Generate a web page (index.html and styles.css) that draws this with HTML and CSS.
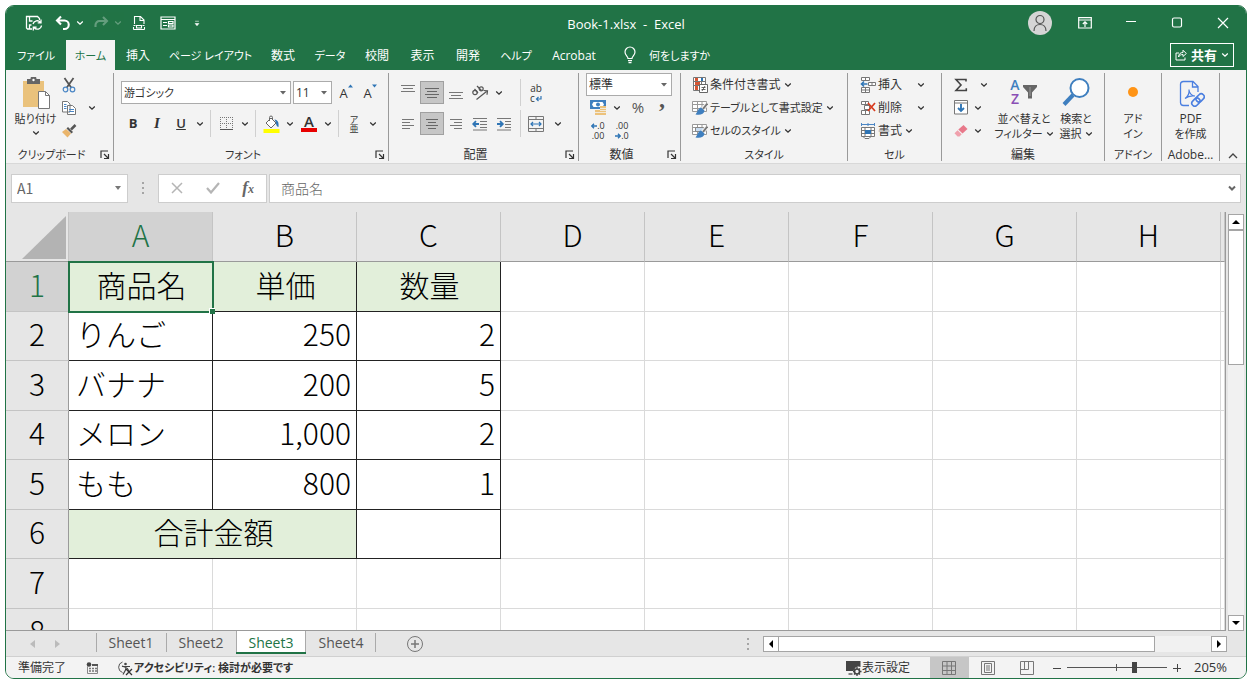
FILE: index.html
```html
<!DOCTYPE html>
<html lang="ja">
<head>
    <meta charset="UTF-8">
    <meta name="viewport" content="width=device-width, initial-scale=1.0">
    <title>Book-1.xlsx - Excel</title>
    <link rel="stylesheet" href="styles.css">
</head>
<body>
    <svg class="defs" aria-hidden="true">
        <symbol id="chev" viewBox="0 0 8 8"><path d="M1.2 2.5 4 5.2 6.8 2.5" fill="none" stroke="currentColor" stroke-width="1.3"/></symbol>
        <symbol id="launch" viewBox="0 0 10 10"><path d="M1 8V1h7M4 4l4 4M8.500 4v4.500H4" fill="none" stroke="currentColor" stroke-width="1.200"/></symbol>
        <symbol id="brush" viewBox="0 0 16 16"><path d="M15.300 3.500 10.500 9.500" stroke="#f3f3f3" stroke-width="4"/><path d="M15.300 3.500 11 9" stroke="#777" stroke-width="2"/><path d="M12.500 10.500 9 7.500c-3 .5-3 4-5.500 7 4.500 1 8.500 0 9-4z" fill="#3f7fbf"/></symbol>
        <symbol id="minigrid" viewBox="0 0 16 16"><path d="M.5 1.500h14v10H.5zM.5 4.500h14M.5 8.500h14M5.500 1.500v10M10 1.500v10" fill="#fff" stroke="#999"/></symbol>
    </svg>

    <div class="window">
        <!-- Title bar -->
        <header class="titlebar">
            <div class="quick">
                <button class="ib" aria-label="上書き保存"><svg width="18" height="18" viewBox="0 0 18 18"><path d="M7 15H2.500L1.500 14V2.500h11l2 2V6M4.500 2.500V7h3M4.500 15v-4h2" fill="none" stroke="#fff" stroke-width="1.300"/><path d="M8 10a4.200 4.200 0 0 1 7.500-1.500M16 5.500v3.300h-3.300M16.500 11.500A4.200 4.200 0 0 1 9 13.500M8.300 16.500v-3.300h3.300" fill="none" stroke="#fff" stroke-width="1.300"/></svg></button>
                <div class="pair">
                    <button class="ib" aria-label="元に戻す"><svg width="16" height="16" viewBox="0 0 16 16"><path d="M6 1.500 2 5.500l4 4M2 5.500h7.500a4.200 4.200 0 0 1 0 8.500H8" fill="none" stroke="#fff" stroke-width="2.100"/></svg></button>
                    <button class="caret" aria-label="元に戻す履歴"><svg><use href="#chev"/></svg></button>
                </div>
                <div class="pair dim">
                    <button class="ib" aria-label="やり直し"><svg width="16" height="16" viewBox="0 0 16 16"><path d="M10 2l4 4-4 4M14 6H6.500a4 4 0 0 0-4 4v2" fill="none" stroke="#fff" stroke-width="2.100"/></svg></button>
                    <button class="caret" aria-label="やり直し履歴"><svg><use href="#chev"/></svg></button>
                </div>
                <button class="ib" aria-label="印刷プレビュー"><svg width="14" height="16" viewBox="0 0 14 16"><path d="M2.500 9V1.500h6l3.500 3.500v4M8 1.500V5.500h4M1.500 10.500h2M10.500 10.500h2M1.500 14.500h11M1.500 12v2.500M12.500 12v2.500M4.500 10.500h5v2.500h-5z" fill="none" stroke="#fff" stroke-width="1.100"/></svg></button>
                <button class="ib" aria-label="フォーム"><svg width="16" height="14" viewBox="0 0 16 14"><path d="M1 1h14v12H1zM1 3.500h14M3 6.500h4M3 9.500h4M8.500 5.500h4.500v2H8.500zM8.500 9h4.500v2H8.500z" fill="none" stroke="#fff" stroke-width="1.200"/></svg></button>
                <button class="ib" aria-label="カスタマイズ"><svg width="6" height="7" viewBox="0 0 8 8"><path d="M1.500 1h5M1.500 4h5L4 7z" fill="#fff" stroke="#fff" stroke-width=".8"/></svg></button>
            </div>
            <div class="title">Book-1.xlsx &nbsp;-&nbsp; Excel</div>
            <div class="winbtns">
                <button class="avatar" aria-label="アカウント"><svg width="16" height="18" viewBox="0 0 16 18"><circle cx="8" cy="5.500" r="4" fill="none" stroke="#555" stroke-width="1.200"/><path d="M2 17c0-4 2.500-6.500 6-6.500s6 2.500 6 6.500" fill="none" stroke="#555" stroke-width="1.200"/></svg></button>
                <button class="wb" aria-label="リボンの表示"><svg width="14" height="12" viewBox="0 0 14 12"><path d="M.7.7h12.600v10.300H.7zM.7 3h12.600M7 10V5M4.800 7 7 4.800 9.200 7" fill="none" stroke="#fff" stroke-width="1.200"/></svg></button>
                <button class="wb" aria-label="最小化"><svg width="12" height="12" viewBox="0 0 12 12"><path d="M1 4.500h10" stroke="#fff" stroke-width="1.200"/></svg></button>
                <button class="wb" aria-label="最大化"><svg width="12" height="12" viewBox="0 0 12 12"><rect x="1.500" y="1" width="9" height="9" rx="1.500" fill="none" stroke="#fff" stroke-width="1.200"/></svg></button>
                <button class="wb" aria-label="閉じる"><svg width="12" height="12" viewBox="0 0 12 12"><path d="m1 1 10 10M11 1 1 11" stroke="#fff" stroke-width="1.200"/></svg></button>
            </div>
        </header>

        <!-- Ribbon tabs -->
        <nav class="tabs">
            <button class="kana">ファイル</button>
            <button class="active kana">ホーム</button>
            <button>挿入</button>
            <button class="kana">ページ レイアウト</button>
            <button>数式</button>
            <button class="kana">データ</button>
            <button>校閲</button>
            <button>表示</button>
            <button>開発</button>
            <button class="kana">ヘルプ</button>
            <button>Acrobat</button>
            <button class="tellme kana"><svg width="12" height="18" viewBox="0 0 12 18"><path d="M4 12.500c0-2-3-3-3-6.500a5 5 0 0 1 10 0c0 3.500-3 4.500-3 6.500zM4 14.700h4M4.500 16.700h3" fill="none" stroke="#fff" stroke-width="1.200"/></svg>何をしますか</button>
            <button class="share"><svg width="12" height="12" viewBox="0 0 12 12"><path d="M4 4H1v7h9V8.500M3.500 8c.2-3 1.800-4.500 4.500-4.500V1.200L11.300 4.500 8 7.500V5.500C6 5.500 4.500 6.200 3.500 8z" fill="none" stroke="#fff"/></svg><b>共有</b><svg class="chev"><use href="#chev"/></svg></button>
        </nav>

        <!-- Ribbon -->
        <div class="ribbon">
            <section class="group">
                <div class="body clipboard">
                    <button class="big kana">
                        <svg width="30" height="32" viewBox="0 0 30 32"><path d="M2 4h21v26H2z" fill="#eac27c"/><path d="M6 2h3.500a3 3 0 0 1 6 0H19v5H6z" fill="#666"/><circle cx="12.500" cy="3" r="1.200" fill="#fff"/><path d="M17.500 14.500h7l4 4v13h-11z" fill="#fff" stroke="#777"/><path d="M24.500 14.500v4h4" fill="none" stroke="#777"/></svg>
                        <span>貼り付け</span>
                        <svg class="chev"><use href="#chev"/></svg>
                    </button>
                    <div class="stack">
                        <button class="ib" aria-label="切り取り"><svg width="14" height="16" viewBox="0 0 14 16"><path d="M2.500 1 9.500 11M11.500 1 4.500 11" stroke="#555" stroke-width="1.800"/><circle cx="3.500" cy="12.500" r="2.300" fill="none" stroke="#4a86c5" stroke-width="1.200"/><circle cx="10.500" cy="12.500" r="2.300" fill="none" stroke="#4a86c5" stroke-width="1.200"/></svg></button>
                        <div class="pair">
                            <button class="ib" aria-label="コピー"><svg width="16" height="16" viewBox="0 0 16 16"><path d="M1.500 1.500h5l2.500 2.500v8H1.500zM6.500 5.500h5l3 3v6h-8z" fill="#fff" stroke="#777"/><path d="M3 4.500h2.500M3 6.500h2.500M3 8.500h2.500M8 9.500h5M8 11.500h5" stroke="#4a86c5"/></svg></button>
                            <button class="caret" aria-label="コピーのオプション"><svg><use href="#chev"/></svg></button>
                        </div>
                        <button class="ib" aria-label="書式のコピー"><svg width="16" height="14" viewBox="0 0 16 14"><path d="M14.500 1 10 5.500" stroke="#555" stroke-width="2.500"/><path d="m7 3 5 5-1.500 1.500-5-5z" fill="#555"/><path d="M5 5 10 9.500 6.500 13.500 1 8z" fill="#eab56c"/></svg></button>
                    </div>
                </div>
                <div class="foot"><span class="kana">クリップボード</span><button class="launch" aria-label="クリップボードの設定"><svg width="10" height="10"><use href="#launch"/></svg></button></div>
            </section>

            <section class="group">
                <div class="body rows">
                    <div class="row">
                        <select class="fontname kana" aria-label="フォント"><option>游ゴシック</option></select>
                        <select class="fontsize" aria-label="フォント サイズ"><option>11</option></select>
                        <button class="ib grow" aria-label="フォント サイズの拡大"><span>A</span><svg width="5" height="4" viewBox="0 0 5 4"><path d="M0 3.500h5L2.500.5z" fill="#2f75b5"/></svg></button>
                        <button class="ib grow" aria-label="フォント サイズの縮小"><span>A</span><svg width="5" height="4" viewBox="0 0 5 4"><path d="M0 .5h5L2.500 3.500z" fill="#2f75b5"/></svg></button>
                    </div>
                    <div class="row">
                        <button class="ib letter"><b>B</b></button>
                        <button class="ib letter"><i>I</i></button>
                        <button class="ib letter"><u>U</u></button>
                        <button class="caret" aria-label="下線の種類"><svg><use href="#chev"/></svg></button>
                        <span class="sep"></span>
                        <button class="ib" aria-label="罫線"><svg width="15" height="15" viewBox="0 0 15 15"><path d="M1 1.500h13M1.500 1v13M13.500 1v13M7.500 1v13M1 7.500h13" stroke="#777" stroke-dasharray="1 1"/><path d="M1 13.500h13" stroke="#555"/></svg></button>
                        <button class="caret" aria-label="罫線の種類"><svg><use href="#chev"/></svg></button>
                        <span class="sep"></span>
                        <button class="ib" aria-label="塗りつぶしの色"><svg width="17" height="18" viewBox="0 0 17 18"><path d="M3 8 8 3l5 5-5 5z" fill="#fff" stroke="#666"/><path d="M6.500 6V2.500a1.500 1.500 0 0 1 3 0V5" fill="none" stroke="#666"/><path d="M11.500 4.500c3.500.5 4.500 3 4 7.500-1.800-.5-2.500-2-2.500-4.500z" fill="#2f75b5"/><path d="M.5 14h16v4H.5z" fill="#ff0"/></svg></button>
                        <button class="caret" aria-label="塗りつぶしの色の選択"><svg><use href="#chev"/></svg></button>
                        <button class="ib fcolor" aria-label="フォントの色"><b>A</b></button>
                        <button class="caret" aria-label="フォントの色の選択"><svg><use href="#chev"/></svg></button>
                        <span class="sep"></span>
                        <button class="ib ruby" aria-label="ふりがな"><span>ア</span><span>亜</span></button>
                        <button class="caret" aria-label="ふりがなの設定"><svg><use href="#chev"/></svg></button>
                    </div>
                </div>
                <div class="foot"><span class="kana">フォント</span><button class="launch" aria-label="フォントの設定"><svg width="10" height="10"><use href="#launch"/></svg></button></div>
            </section>

            <section class="group">
                <div class="body rows align">
                    <div class="row">
                        <button class="ib" aria-label="上揃え"><svg width="16" height="16" viewBox="0 0 16 16"><path d="M1 .5h14M3 3.500h10M1 6.500h14" stroke="#777"/></svg></button>
                        <button class="ib on" aria-label="上下中央揃え"><svg width="16" height="16" viewBox="0 0 16 16"><path d="M1 3.500h14M3 6.500h10M1 9.500h14M3 12.500h10" stroke="#666"/></svg></button>
                        <button class="ib" aria-label="下揃え"><svg width="16" height="16" viewBox="0 0 16 16"><path d="M1 7.500h14M3 10.500h10M1 13.500h14" stroke="#777"/></svg></button>
                        <button class="ib" aria-label="方向"><svg width="18" height="16" viewBox="0 0 18 16"><g fill="none" stroke="#555" stroke-width="1.200"><circle cx="4" cy="7.500" r="2.200"/><path d="M3.500 4 7 8"/><path d="M6 1 10.500 5.500"/><circle cx="10.200" cy="3.800" r="2"/><path d="M5.500 14.500 15.500 6.500M12.500 5.500l4 .3-.5 4"/></g></svg></button>
                        <button class="caret" aria-label="方向の選択"><svg><use href="#chev"/></svg></button>
                        <span class="sep"></span>
                        <button class="ib wrap" aria-label="折り返して全体を表示する"><span>ab</span><span>c<svg width="7" height="6" viewBox="0 0 7 6"><path d="M6 0v3H1.500M3.500 1 1.500 3l2 2" fill="none" stroke="#2f75b5" stroke-width="1.200"/></svg></span></button>
                    </div>
                    <div class="row">
                        <button class="ib" aria-label="左揃え"><svg width="14" height="12" viewBox="0 0 14 12"><path d="M1 1.500h12M1 4.500h8M1 7.500h12M1 10.500h8" stroke="#777"/></svg></button>
                        <button class="ib on" aria-label="中央揃え"><svg width="14" height="12" viewBox="0 0 14 12"><path d="M1 1.500h12M3 4.500h8M1 7.500h12M3 10.500h8" stroke="#666"/></svg></button>
                        <button class="ib" aria-label="右揃え"><svg width="14" height="12" viewBox="0 0 14 12"><path d="M1 1.500h12M5 4.500h8M1 7.500h12M5 10.500h8" stroke="#777"/></svg></button>
                        <button class="ib" aria-label="インデントを減らす"><svg width="16" height="14" viewBox="0 0 16 14"><path d="M1 1.500h14M8 4.500h7M8 7.500h7M8 10.500h7M1 13h14" stroke="#777"/><path d="M7 7H1.500M4 4.200 1.200 7 4 9.800" fill="none" stroke="#2f75b5" stroke-width="1.800"/></svg></button>
                        <button class="ib" aria-label="インデントを増やす"><svg width="16" height="14" viewBox="0 0 16 14"><path d="M1 1.500h14M9 4.500h6M9 7.500h6M9 10.500h6M1 13h14" stroke="#777"/><path d="M1 7h5.500M4 4.200 6.800 7 4 9.800" fill="none" stroke="#2f75b5" stroke-width="1.800"/></svg></button>
                        <span class="sep"></span>
                        <button class="ib" aria-label="セルを結合して中央揃え"><svg width="16" height="16" viewBox="0 0 16 16"><path d="M.5.500h15v15H.5zM.5 3.500h15M.5 12.500h15M8 .5v3M8 12.500v3" fill="none" stroke="#777"/><path d="M3 8h10M5 6 3 8l2 2M11 6l2 2-2 2" fill="none" stroke="#2f75b5" stroke-width="1.200"/></svg></button>
                        <button class="caret wide" aria-label="結合の種類"><svg><use href="#chev"/></svg></button>
                    </div>
                </div>
                <div class="foot"><span>配置</span><button class="launch" aria-label="配置の設定"><svg width="10" height="10"><use href="#launch"/></svg></button></div>
            </section>

            <section class="group">
                <div class="body lines">
                    <select class="format" aria-label="表示形式"><option>標準</option></select>
                    <div class="row">
                        <button class="ib" aria-label="通貨表示形式"><svg width="16" height="15" viewBox="0 0 16 15"><path d="M0 0h16v9H0z" fill="#3f7fbf"/><path d="M2 4.500 3.500 2h9L14 4.500 12.500 7h-9z" fill="#fff"/><circle cx="8" cy="4.500" r="2" fill="#3f7fbf"/><path d="M10 6h6v9h-6zM5 10h5v5H5z" fill="#ecc27c"/><path d="M10 8.500h6M10 10.500h6M10 12.500h6M5 12.500h5" stroke="#f3f3f3" stroke-width=".8"/></svg></button>
                        <button class="caret" aria-label="通貨の選択"><svg><use href="#chev"/></svg></button>
                        <button class="ib sym">%</button>
                        <button class="ib comma"><b>,</b></button>
                    </div>
                    <div class="row">
                        <button class="ib dec" aria-label="小数点以下の表示桁数を増やす"><span><svg width="6" height="6" viewBox="0 0 6 6"><path d="M6 3H1M3 .8.800 3 3 5.200" fill="none" stroke="#2f75b5" stroke-width="1.400"/></svg>.0</span><span>.00</span></button>
                        <button class="ib dec" aria-label="小数点以下の表示桁数を減らす"><span>.00</span><span><svg width="6" height="6" viewBox="0 0 6 6"><path d="M0 3h5M3 .8 5.200 3 3 5.200" fill="none" stroke="#2f75b5" stroke-width="1.400"/></svg>.0</span></button>
                    </div>
                </div>
                <div class="foot"><span>数値</span><button class="launch" aria-label="数値の設定"><svg width="10" height="10"><use href="#launch"/></svg></button></div>
            </section>

            <section class="group">
                <div class="body lines styles">
                    <button class="cmd"><svg width="16" height="16" viewBox="0 0 16 16"><path d="M1.500.5h12v13h-12zM1.500 4.500h12M1.500 8.500h12M5.500.5v13M9.500.5v13" fill="#fff" stroke="#777"/><path d="M3 1h3v3H3zM3 5h5v3H3zM3 9h3v4H3z" fill="#d65532"/><path d="M9 1h2v3H9z" fill="#2f75b5"/><path d="M7.500 7.500h8v8h-8z" fill="#fff" stroke="#666"/><path d="M9.500 10.500h4M9.500 12.500h4M13 9l-3 5" stroke="#444" stroke-width=".8"/></svg>条件付き書式<svg class="chev"><use href="#chev"/></svg></button>
                    <button class="cmd kana"><svg width="16" height="16" viewBox="0 0 16 16"><use href="#minigrid" width="16" height="16"/><use href="#brush" width="16" height="16"/></svg>テーブルとして書式設定<svg class="chev"><use href="#chev"/></svg></button>
                    <button class="cmd kana"><svg width="16" height="16" viewBox="0 0 16 16"><use href="#minigrid" width="16" height="16"/><path d="M3.500 4.500h8v4h-8z" fill="#c9dcf0" stroke="#888"/><use href="#brush" width="16" height="16"/></svg>セルのスタイル<svg class="chev"><use href="#chev"/></svg></button>
                </div>
                <div class="foot"><span class="kana">スタイル</span></div>
            </section>

            <section class="group">
                <div class="body lines cells">
                    <div class="row"><button class="cmd"><svg width="16" height="16" viewBox="0 0 16 16"><path d="M1.500.5h8v3h-8zM1.500 10.500h8v5h-8zM5.500.5v3M5.500 10.500v5M1.500 13h8M8.500 5.500h7v3h-7zM12 5.500v3" fill="#fff" stroke="#777"/><path d="M7.500 7H1.500M4 4.500 1.500 7 4 9.500" fill="none" stroke="#2f75b5" stroke-width="1.600"/></svg>挿入</button><button class="caret far" aria-label="挿入の種類"><svg><use href="#chev"/></svg></button></div>
                    <div class="row"><button class="cmd"><svg width="16" height="16" viewBox="0 0 16 16"><path d="M1.500 1.500h7v3h-7zM4.500 5.500h5v4h-5zM1.500 10.500h8v4h-8zM5.500 10.500v4M5.500 1.500v3" fill="#fff" stroke="#777"/><path d="m8 3 7 8M15 3 8 11" stroke="#d83b1e" stroke-width="1.700"/></svg>削除</button><button class="caret far" aria-label="削除の種類"><svg><use href="#chev"/></svg></button></div>
                    <button class="cmd"><svg width="16" height="16" viewBox="0 0 16 16"><path d="M1.500 4.500h13v9h-13zM1.500 7.500h13M1.500 10.500h13M5 4.500v9M11 4.500v9" fill="#fff" stroke="#777"/><path d="M5 7h6v4H5z" fill="#2f75b5"/><path d="M1.500 1.500h13M1.500 0v3M14.500 0v3M8 0v3" stroke="#4a86c5"/><path d="M3 13.500h8l-2 2H5z" fill="#fff" stroke="#777"/></svg>書式<svg class="chev"><use href="#chev"/></svg></button>
                </div>
                <div class="foot"><span class="kana">セル</span></div>
            </section>

            <section class="group">
                <div class="body editing">
                    <div class="stack">
                        <div class="pair"><button class="ib" aria-label="オート SUM"><svg width="14" height="14" viewBox="0 0 14 14"><path d="M12 3.500V1.500H2l5 5.500-5 5.500h10.300v-2.300" fill="none" stroke="#444" stroke-width="1.600"/></svg></button><button class="caret sum" aria-label="集計方法"><svg><use href="#chev"/></svg></button></div>
                        <div class="pair"><button class="ib" aria-label="フィル"><svg width="14" height="15" viewBox="0 0 14 15"><path d="M.5.500h13v13.500H.5z" fill="#fff" stroke="#777"/><path d="M.5 3h13" stroke="#777"/><path d="M7 4v7M4 8l3 3 3-3" fill="none" stroke="#2f75b5" stroke-width="1.900"/></svg></button><button class="caret" aria-label="フィルの種類"><svg><use href="#chev"/></svg></button></div>
                        <div class="pair"><button class="ib" aria-label="クリア"><svg width="14" height="14" viewBox="0 0 14 14"><path d="M9.500 1 13.500 5 8.500 9.500 4.300 5.500z" fill="#e8788a"/><path d="M3.600 6.200 7.700 10.200 5.500 12.500H3.500L.5 9.300z" fill="#f0a0ac"/></svg></button><button class="caret" aria-label="クリアの種類"><svg><use href="#chev"/></svg></button></div>
                    </div>
                    <button class="big two wider">
                        <span class="az"><span class="azcol"><b>A</b><b>Z</b></span><svg width="16" height="16" viewBox="0 0 16 16"><path d="M1 1h14v2L10 8.500v6H6v-6L1 3z" fill="#666"/><path d="M8 3v9" stroke="#999"/></svg></span>
                        <span class="kana">並べ替えと</span>
                        <span class="kana">フィルター<svg class="chev"><use href="#chev"/></svg></span>
                    </button>
                    <button class="big two">
                        <svg width="28" height="30" viewBox="0 0 28 30"><circle cx="17.500" cy="11" r="9" fill="#fff" stroke="#3f7fbf" stroke-width="2"/><path d="M11 18 2 27.500" stroke="#3f7fbf" stroke-width="4"/></svg>
                        <span class="kana">検索と</span>
                        <span class="kana">選択<svg class="chev"><use href="#chev"/></svg></span>
                    </button>
                </div>
                <div class="foot"><span>編集</span></div>
            </section>

            <section class="group">
                <div class="body center">
                    <button class="big two">
                        <svg width="28" height="30" viewBox="0 0 28 30"><circle cx="14" cy="15" r="5" fill="#ff9416"/></svg>
                        <span class="kana">アド</span>
                        <span class="kana">イン</span>
                    </button>
                </div>
                <div class="foot"><span class="kana">アドイン</span></div>
            </section>

            <section class="group">
                <div class="body center">
                    <button class="big two">
                        <svg width="28" height="30" viewBox="0 0 28 30"><path d="M12 28.500H6.500a3 3 0 0 1-3-3v-18a3 3 0 0 1 3-3H16l5 5V15M15.500 4.500V10H21" fill="none" stroke="#4b7fe0" stroke-width="1.300"/><path d="M8 21.500c3-2 4.500-5 4-9M12 13c.5 3.500 2.500 5.500 6 6M8 21.500c3-2.500 6-3 10-2.500" fill="none" stroke="#4b7fe0" stroke-width="1.200"/><g fill="none" stroke="#4b7fe0" stroke-width="1.600" transform="rotate(-45 21 23)"><rect x="13.500" y="20" width="9" height="6" rx="3"/><rect x="19.500" y="20" width="9" height="6" rx="3"/></g></svg>
                        <span>PDF</span>
                        <span class="kana">を作成</span>
                    </button>
                </div>
                <div class="foot"><span>Adobe…</span></div>
            </section>
            <button class="collapse" aria-label="リボンを折りたたむ"><svg width="10" height="8" viewBox="0 0 10 8"><path d="M1 6l4-4 4 4" fill="none" stroke="#444" stroke-width="1.300"/></svg></button>
        </div>

        <!-- Formula bar -->
        <div class="formulabar">
            <div class="namebox">
                <input type="text" value="A1" aria-label="名前ボックス">
                <svg width="6" height="4" viewBox="0 0 6 4"><path d="M0 0h6L3 4z" fill="#777"/></svg>
            </div>
            <span class="dots"></span>
            <div class="fx">
                <button aria-label="キャンセル"><svg width="14" height="12" viewBox="0 0 14 12"><path d="m2 1 10 10M12 1 2 11" stroke="#b5b5b5" stroke-width="1.500"/></svg></button>
                <button aria-label="入力"><svg width="14" height="12" viewBox="0 0 14 12"><path d="m1 6 4 4.500L13 1" fill="none" stroke="#b5b5b5" stroke-width="2.200"/></svg></button>
                <button aria-label="関数の挿入"><i>f<small>x</small></i></button>
            </div>
            <div class="formula">
                <input type="text" value="商品名" aria-label="数式バー">
                <button aria-label="展開"><svg width="8" height="8" viewBox="0 0 8 8"><path d="M1 2.500 4 5.500 7 2.500" fill="none" stroke="#666" stroke-width="2"/></svg></button>
            </div>
        </div>

        <!-- Worksheet -->
        <main class="sheet">
            <div class="gridwrap">
                <table class="grid">
                    <colgroup><col class="rowhead"><col class="c"><col class="c"><col class="c"><col class="c"><col class="c"><col class="c"><col class="c"><col class="c"><col></colgroup>
                    <thead>
                        <tr><th class="corner"><svg width="44" height="43" viewBox="0 0 44 43"><path d="M44 0v43H0z" fill="#b3b3b3"/></svg></th><th class="sel">A</th><th>B</th><th>C</th><th>D</th><th>E</th><th>F</th><th>G</th><th>H</th><th></th></tr>
                    </thead>
                    <tbody>
                        <tr><th class="sel">1</th><td class="b head current">商品名</td><td class="b head">単価</td><td class="b head">数量</td><td></td><td></td><td></td><td></td><td></td><td></td></tr>
                        <tr><th>2</th><td class="b">りんご</td><td class="b num">250</td><td class="b num">2</td><td></td><td></td><td></td><td></td><td></td><td></td></tr>
                        <tr><th>3</th><td class="b">バナナ</td><td class="b num">200</td><td class="b num">5</td><td></td><td></td><td></td><td></td><td></td><td></td></tr>
                        <tr><th>4</th><td class="b">メロン</td><td class="b num">1,000</td><td class="b num">2</td><td></td><td></td><td></td><td></td><td></td><td></td></tr>
                        <tr><th>5</th><td class="b">もも</td><td class="b num">800</td><td class="b num">1</td><td></td><td></td><td></td><td></td><td></td><td></td></tr>
                        <tr><th>6</th><td class="b head" colspan="2">合計金額</td><td class="b"></td><td></td><td></td><td></td><td></td><td></td><td></td></tr>
                        <tr><th>7</th><td></td><td></td><td></td><td></td><td></td><td></td><td></td><td></td><td></td></tr>
                        <tr><th>8</th><td></td><td></td><td></td><td></td><td></td><td></td><td></td><td></td><td></td></tr>
                    </tbody>
                </table>
            </div>
            <div class="vscroll">
                <button aria-label="上へ"><svg width="8" height="4" viewBox="0 0 8 4"><path d="M0 4h8L4 0z"/></svg></button>
                <div class="track"><div class="thumb"></div></div>
                <button aria-label="下へ"><svg width="8" height="4" viewBox="0 0 8 4"><path d="M0 0h8L4 4z"/></svg></button>
            </div>
        </main>

        <!-- Sheet tabs -->
        <div class="sheetbar">
            <div class="sheetnav">
                <button aria-label="前のシート"><svg width="5" height="8" viewBox="0 0 5 8"><path d="M5 0v8L0 4z" fill="#bbb"/></svg></button>
                <button aria-label="次のシート"><svg width="5" height="8" viewBox="0 0 5 8"><path d="M0 0v8l5-4z" fill="#bbb"/></svg></button>
            </div>
            <div class="sheettabs">
                <button>Sheet1</button>
                <button>Sheet2</button>
                <button class="active">Sheet3</button>
                <button>Sheet4</button>
            </div>
            <button class="add" aria-label="新しいシート"><svg width="18" height="18" viewBox="0 0 18 18"><circle cx="9" cy="9" r="7.500" fill="none" stroke="#777"/><path d="M9 5v8M5 9h8" stroke="#777" stroke-width="1.500"/></svg></button>
            <span class="dots"></span>
            <div class="hscroll">
                <button aria-label="左へ"><svg width="4" height="8" viewBox="0 0 4 8"><path d="M4 0v8L0 4z"/></svg></button>
                <div class="track"><div class="thumb"></div></div>
                <button aria-label="右へ"><svg width="4" height="8" viewBox="0 0 4 8"><path d="M0 0v8l4-4z"/></svg></button>
            </div>
        </div>

        <!-- Status bar -->
        <footer class="status">
            <span class="ready">準備完了</span>
            <svg class="macro" width="13" height="12" viewBox="0 0 13 12"><path d="M1.500 4.500v7h10v-9H6" fill="none" stroke="#888"/><circle cx="3" cy="2.500" r="2.300" fill="#444"/><path d="M6 3h6" stroke="#555" stroke-width="2"/><path d="M3 6.500h8M3 9h8" stroke="#777" stroke-width="1.400" stroke-dasharray="2 1"/></svg>
            <button class="access kana"><svg width="17" height="16" viewBox="0 0 17 16"><path d="M5.500 12.500A5.500 5.500 0 0 1 5.500 2" fill="none" stroke="#555"/><path d="M5 6l4 1.500L8.500 10 6 14.500M5 6.500h8M10 8l2 3" fill="none" stroke="#444" stroke-width="1.200"/><circle cx="8.500" cy="4" r="1.300" fill="#444"/><path d="m9 9 6 6M15 9 9 15" stroke="#333" stroke-width="1.300"/></svg>アクセシビリティ: 検討が必要です</button>
            <button class="display"><svg width="17" height="16" viewBox="0 0 17 16"><path d="M1 1h14.500v6a5 5 0 0 0-7 4H1z" fill="#444"/><path d="M3.500 14h4" stroke="#444" stroke-width="1.300"/><circle cx="12" cy="11.500" r="2.500" fill="none" stroke="#444" stroke-width="1.600"/><path d="M12 7v2M12 14v2M8 11.500h2M14 11.500h2.500M9 8.500l1.300 1.300M13.700 13.200 15 14.500M15 8.500l-1.300 1.300M10.300 13.200 9 14.500" stroke="#444" stroke-width="1.300"/></svg>表示設定</button>
            <button class="view on" aria-label="標準"><svg width="14" height="14" viewBox="0 0 14 14"><path d="M.5.500h13v13H.5zM.5 5h13M.5 9.500h13M5 .5v13M9.500.5v13" fill="none" stroke="#777"/></svg></button>
            <button class="view" aria-label="ページ レイアウト"><svg width="14" height="14" viewBox="0 0 14 14"><path d="M.5.500h13v13H.5zM3.500 2.500h7v9h-7zM5 5h4M5 7h4M5 9h4" fill="none" stroke="#777"/></svg></button>
            <button class="view" aria-label="改ページ プレビュー"><svg width="14" height="14" viewBox="0 0 14 14"><path d="M.5.500h13v13H.5zM.5 8.500h8V.5M4.500.5v8" fill="none" stroke="#777"/></svg></button>
            <div class="zoom">
                <button aria-label="縮小"><svg width="8" height="8" viewBox="0 0 8 8"><path d="M0 4.500h8" stroke="#444"/></svg></button>
                <input type="range" min="0" max="100" value="68" aria-label="ズーム">
                <button aria-label="拡大"><svg width="8" height="8" viewBox="0 0 8 8"><path d="M0 4.500h8M4.500 0v8" stroke="#444"/></svg></button>
            </div>
            <span class="percent">205%</span>
        </footer>
    </div>
</body>
</html>
```

FILE: styles.css
```css
* {
    box-sizing: border-box;
}
body {
    margin: 0;
    padding: 5px 5px 7px;
    height: 100vh;
    background-color: #fff;
    font-family: "Open Sans", "Noto Sans CJK JP", sans-serif;
    font-size: 12px;
    line-height: 15px;
    color: #333;
    font-feature-settings: "palt";
}
button, input, select {
    font: inherit;
    font-feature-settings: inherit;
    color: inherit;
    margin: 0;
    padding: 0;
    border: none;
    border-radius: 0;
    background: none;
    outline: none;
}
button {
    display: flex;
    align-items: center;
    justify-content: center;
    white-space: nowrap;
}
svg {
    flex: none;
}
.defs {
    position: absolute;
    width: 0;
    height: 0;
}
.kana {
    font-size: 11px;
}
.window {
    display: flex;
    flex-direction: column;
    height: 100%;
    border: 1px solid #217346;
    border-radius: 9px;
    overflow: hidden;
    background-color: #e6e6e6;
}

/* title bar */
.titlebar {
    display: grid;
    grid-template-columns: 1fr auto 1fr;
    align-items: center;
    height: 34px;
    background-color: #217346;
    color: #fff;
}
.quick {
    display: flex;
    align-items: center;
    gap: 5px;
    padding-left: 16px;
}
.pair {
    display: flex;
    align-items: center;
}
.quick .caret {
    width: 9px;
}
.dim {
    opacity: 0.3;
}
.title {
    font-size: 13px;
    padding-top: 3px;
}
.winbtns {
    display: flex;
    align-items: center;
    justify-content: flex-end;
}
.wb {
    width: 46px;
    height: 32px;
}
.avatar {
    width: 24px;
    height: 24px;
    margin-right: 10px;
    border-radius: 50%;
    background-color: #d5d5d5;
}
.ib {
    width: 24px;
    height: 23px;
    flex: none;
}
.caret {
    width: 14px;
    height: 23px;
    flex: none;
}
.caret svg, .chev {
    width: 8px;
    height: 8px;
}

/* ribbon tabs */
.tabs {
    display: grid;
    grid-template-columns: 60px 49px 46px 99px 46px 48px 46px 45px 46px 50px 66px 1fr auto;
    height: 30px;
    background-color: #217346;
    color: #fff;
}
.tabs .active {
    background-color: #f3f3f3;
    color: #217346;
}
.tellme {
    justify-content: flex-start;
    gap: 13px;
    padding-left: 17px;
}
.share {
    align-self: center;
    gap: 4px;
    width: 64px;
    height: 24px;
    margin-right: 12px;
    border: 1px solid #fff;
}
.share b {
    font-size: 13px;
}

/* ribbon */
.ribbon {
    display: grid;
    grid-template-columns: 108px 275px 190px 102px 167px 94px 163px 57px 58px 1fr;
    height: 94px;
    background-color: #f3f3f3;
    border-bottom: 1px solid #d8d8d8;
}
.group {
    display: flex;
    flex-direction: column;
    margin: 3px 0 2px;
    border-right: 1px solid #9a9a9a;
}
.body {
    flex: 1;
}
.foot {
    display: grid;
    grid-template-columns: 1fr auto;
    align-items: center;
    height: 12px;
    line-height: 12px;
    text-align: center;
    white-space: nowrap;
}
.launch {
    width: 16px;
    height: 12px;
}
.row {
    display: flex;
    align-items: center;
    height: 23px;
}
.rows {
    display: flex;
    flex-direction: column;
    gap: 8px;
    padding: 8px 0 0 7px;
}
.clipboard {
    display: flex;
    padding-left: 8px;
}
.stack {
    display: flex;
    flex-direction: column;
}
.clipboard .caret {
    margin-left: 4px;
}
.big {
    flex-direction: column;
    justify-content: flex-start;
    width: 43px;
    padding-top: 4px;
}
.big > span:nth-child(2) {
    margin-top: 2px;
}
.big .chev {
    margin-top: 3px;
}
.two {
    width: 50px;
}
.wider {
    width: 54px;
}
.two > span:last-child {
    display: flex;
    align-items: center;
    gap: 3px;
}
.two .chev {
    margin: 0;
}
.two > svg, .az {
    height: 30px;
    margin-bottom: 2px;
}
.az {
    display: flex;
    align-items: center;
    gap: 2px;
}
.azcol {
    display: flex;
    flex-direction: column;
    font-size: 14px;
    line-height: 14px;
    color: #3f7fbf;
}
.azcol b {
    font-weight: 600;
}
.azcol b:last-child {
    color: #8a4fb5;
}
.editing {
    display: flex;
    padding-left: 7px;
}
.editing .stack {
    width: 48px;
}
.editing .caret {
    width: 10px;
}
.editing .sum {
    margin-left: 6px;
}
.center {
    display: flex;
    justify-content: center;
}
select {
    height: 23px;
    padding-left: 2px;
    border: 1px solid #ababab;
    appearance: none;
    background: #fff url("data:image/svg+xml,%3Csvg xmlns='http://www.w3.org/2000/svg' width='6' height='4'%3E%3Cpath d='M0 0h6L3 3.500z' fill='%23666'/%3E%3C/svg%3E") no-repeat right 4px center;
}
.fontname {
    width: 170px;
}
.fontsize {
    width: 39px;
    margin: 0 2px;
}
.format {
    width: 86px;
}
.grow {
    align-items: flex-start;
    padding-top: 3px;
    font-size: 13px;
}
.grow span {
    padding-top: 2px;
}
.letter {
    font-size: 13px;
}
.letter b {
    font-weight: 700;
}
.letter i {
    font-family: "Liberation Serif", serif;
    font-size: 15px;
    font-weight: 700;
}
.letter u {
    font-weight: 600;
}
.sep {
    width: 1px;
    height: 27px;
    margin: 0 3px;
    background-color: #d0d0d0;
}
.fcolor b {
    width: 16px;
    font-size: 15px;
    line-height: 13px;
    font-weight: 600;
    border-bottom: 4px solid #e80000;
}
.ruby {
    flex-direction: column;
    font-size: 9px;
    line-height: 9px;
}
.on {
    background-color: #c6c6c6;
    border: 1px solid #a0a0a0;
}
.align .row {
    width: 172px;
}
.align .sep {
    margin-left: auto;
}
.wide {
    width: 20px;
}
.wrap {
    flex-direction: column;
    margin-right: 20px;
    font-size: 10px;
    line-height: 10px;
}
.lines {
    padding-left: 7px;
}
.sym {
    margin-left: 2px;
    font-size: 15px;
    color: #555;
}
.comma {
    align-items: flex-start;
    font-family: "Liberation Serif", serif;
    font-size: 24px;
    line-height: 7px;
    color: #555;
}
.dec {
    flex-direction: column;
    align-items: center;
    font-size: 9px;
    line-height: 10px;
}
.cmd {
    gap: 2px;
    height: 23px;
}
.cmd .chev {
    margin-left: 1px;
}
.styles {
    padding-left: 11px;
}
.cells {
    padding-left: 12px;
}
.far {
    margin-left: 12px;
}
.collapse {
    align-self: end;
    justify-self: center;
    height: 14px;
}

/* formula bar */
.formulabar {
    display: flex;
    align-items: center;
    height: 48px;
    padding: 0 5px;
    color: #666;
}
.namebox, .fx, .formula {
    display: flex;
    align-items: center;
    height: 29px;
    border: 1px solid #cdcdcd;
    background-color: #fff;
}
.namebox {
    width: 117px;
    padding: 0 6px 0 5px;
    font-family: "Noto Sans CJK JP", sans-serif;
    font-size: 14px;
}
.namebox input, .formula input {
    flex: 1;
    min-width: 0;
}
.dots {
    width: 2px;
    height: 12px;
    margin: 0 14px;
    background: repeating-linear-gradient(#a5a5a5 0 2px, transparent 2px 5px);
}
.fx {
    width: 109px;
    margin-right: 2px;
}
.fx button {
    flex: 1;
}
.fx i {
    font-family: "Liberation Serif", serif;
    font-size: 17px;
    font-weight: 700;
}
.fx small {
    font-size: 12px;
}
.formula {
    flex: 1;
    padding: 0 4px 0 11px;
    font-size: 14px;
    font-weight: 300;
}

/* worksheet */
.sheet {
    display: flex;
    flex: 1;
    min-height: 0;
}
.gridwrap {
    flex: 1;
    overflow: hidden;
    border-right: 1px solid #9a9a9a;
    border-bottom: 1px solid #9a9a9a;
}
.grid {
    width: 100%;
    table-layout: fixed;
    border-collapse: separate;
    border-spacing: 0;
    background-color: #fff;
    font-family: "Noto Sans CJK JP", sans-serif;
    font-size: 30px;
    line-height: 40px;
    font-weight: 300;
    font-feature-settings: normal;
    color: #000;
}
.rowhead {
    width: 63px;
}
.c {
    width: 144px;
}
.grid th {
    padding: 0 0 6px;
    font-weight: 300;
    background-color: #e6e6e6;
    border-right: 1px solid #c4c4c4;
    border-bottom: 1px solid #c4c4c4;
}
.grid thead th {
    height: 50px;
    border-bottom-color: #9a9a9a;
}
.grid tbody th {
    border-right-color: #9a9a9a;
}
.grid .sel {
    background-color: #d2d2d2;
    color: #217346;
}
.grid .corner {
    text-align: right;
    vertical-align: bottom;
    padding: 0 2px 2px 0;
}
.corner svg {
    display: block;
    margin-left: auto;
}
.grid td {
    height: 50px;
    padding: 0 5px 6px 7px;
    border-right: 1px solid #dadada;
    border-bottom: 1px solid #dadada;
    white-space: nowrap;
}
.grid tbody tr:nth-child(even) td {
    height: 49px;
}
.grid .b {
    border-color: #222;
}
.grid .head {
    background-color: #e2efda;
    text-align: center;
}
.grid .num {
    text-align: right;
}
.current {
    position: relative;
}
.current::before {
    content: "";
    position: absolute;
    inset: -1px -2px -2px -1px;
    border: 2px solid #217346;
}
.current::after {
    content: "";
    position: absolute;
    right: -3px;
    bottom: -3px;
    width: 5px;
    height: 5px;
    background-color: #217346;
    border-left: 1px solid #fff;
    border-top: 1px solid #fff;
}
.vscroll {
    display: flex;
    flex-direction: column;
    width: 16px;
    margin: 2px 2px 0 2px;
}
.vscroll button, .hscroll button {
    width: 16px;
    height: 16px;
    background-color: #fff;
    border: 1px solid #a5a5a5;
}
.track {
    flex: 1;
    background-color: #f1f1f1;
}
.thumb {
    background-color: #fff;
    border: 1px solid #a5a5a5;
}
.vscroll .thumb {
    height: 35%;
}

/* sheet tabs */
.sheetbar {
    display: flex;
    align-items: center;
    height: 25px;
    padding-right: 19px;
}
.sheetnav {
    display: flex;
    gap: 20px;
    width: 90px;
    padding-left: 24px;
}
.sheettabs {
    display: flex;
    align-self: flex-start;
    font-size: 14px;
    color: #555;
}
.sheettabs button {
    width: 70px;
    height: 23px;
    background: linear-gradient(#aaa, #aaa) no-repeat left center / 1px 19px;
}
.sheettabs button:last-child {
    background: linear-gradient(#aaa, #aaa) no-repeat right center / 1px 19px;
}
.sheettabs .active {
    background: #fff;
    box-shadow: inset 0 -2px #217346, inset 1px 0 #aaa, inset -1px 0 #aaa;
    color: #217346;
}
.add {
    margin: 0 auto 0 30px;
}
.hscroll {
    display: flex;
    width: 38%;
    height: 16px;
}
.hscroll .track {
    display: flex;
}
.hscroll .thumb {
    width: 87%;
    border-left: none;
}

/* status bar */
.status {
    display: flex;
    align-items: center;
    height: 22px;
    padding: 0 19px 0 12px;
    background-color: #f3f3f3;
    border-top: 1px solid #d0d0d0;
}
.macro {
    margin: 0 18px 0 20px;
}
.access {
    margin-right: auto;
    font-weight: 600;
}
.display {
    margin-right: 20px;
}
.view {
    width: 39px;
    height: 21px;
}
.status .on {
    border: none;
}
.zoom {
    display: flex;
    align-items: center;
    gap: 6px;
    margin-left: 6px;
}
input[type="range"] {
    width: 100px;
    height: 13px;
    appearance: none;
    background: linear-gradient(#555, #555) no-repeat center / 100% 1px, linear-gradient(#555, #555) no-repeat center / 1px 7px;
}
input[type="range"]::-webkit-slider-thumb {
    appearance: none;
    width: 5px;
    height: 11px;
    background-color: #444;
}
.percent {
    margin-left: 13px;
    font-size: 13px;
}
```
